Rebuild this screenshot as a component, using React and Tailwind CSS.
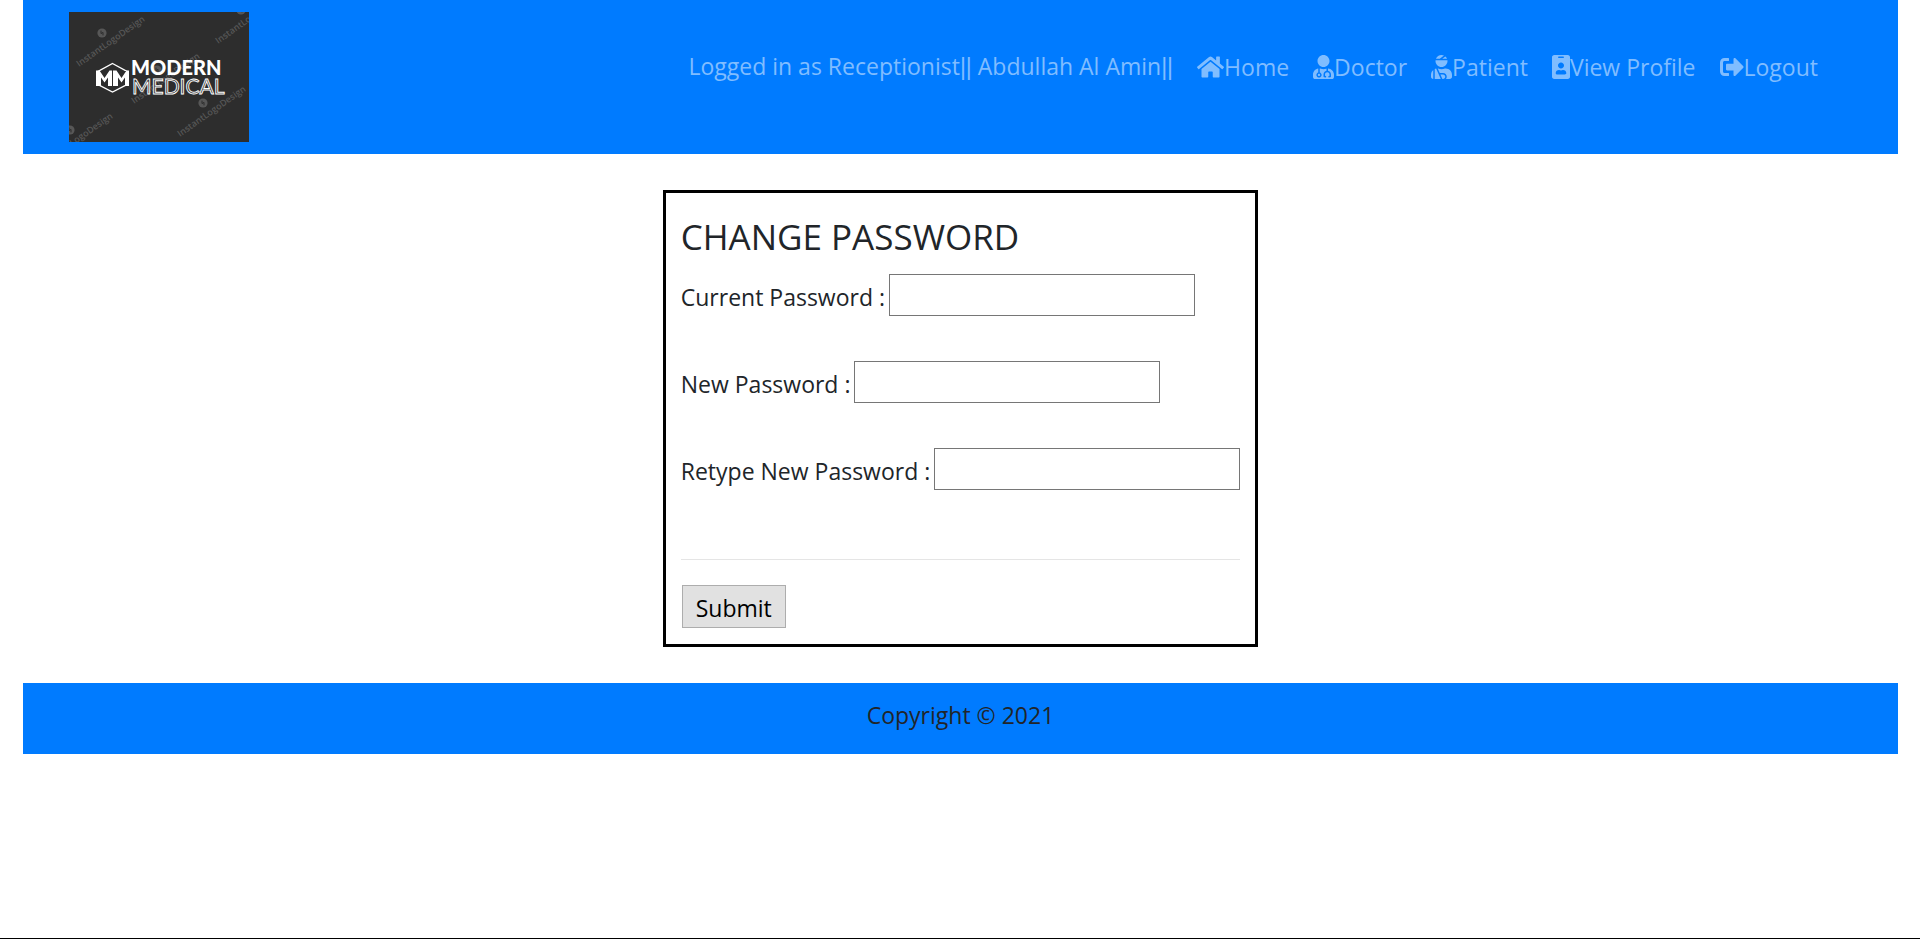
import { FaHome, FaUserMd, FaUserInjured, FaIdBadge, FaSignOutAlt } from "react-icons/fa";

function Watermark({ x, y }) {
  return (
    <g transform={`translate(${x} ${y})`} fill="#575757">
      <circle r="4.6" />
      <path d="M-1 -2.4v3l2 -1.2v3" fill="none" stroke="#2d2d2d" strokeWidth="1" />
      <text
        transform="translate(-23 34) rotate(-35)"
        fontSize="9"
        fontWeight="600"
        fontFamily="'Open Sans', sans-serif"
      >
        InstantLogoDesign
      </text>
    </g>
  );
}

function Logo() {
  return (
    <svg viewBox="0 0 180 130" className="block h-[130px] w-[180px]" role="img" aria-label="Modern Medical">
      <rect width="180" height="130" fill="#2d2d2d" />
      <Watermark x={33} y={21} />
      <Watermark x={172} y={-2} />
      <Watermark x={88} y={58} />
      <Watermark x={134} y={91} />
      <Watermark x={1} y={118} />
      <path d="M43.500 51.500 58 59.500v13L43.500 80 29 72.500v-13z" fill="#2d2d2d" stroke="#fff" strokeWidth="1.400" />
      <rect x="26" y="59" width="35" height="14" fill="#2d2d2d" />
      <path d="M27 74V58.500h3.500l5 7.500 5-7.500H43V74h-4v-8.500l-3.500 5-3.500-5V74zM44 74V58.500h3.500l5 7.500 5-7.500H60V74h-4v-8.500l-3.500 5-3.500-5V74z" fill="#fff" />
      <text x="62" y="63" fontSize="20" fontWeight="900" fontFamily="Lato, sans-serif" fill="#fff">
        MODERN
      </text>
      <text
        x="63"
        y="82"
        fontSize="21"
        fontFamily="Lato, sans-serif"
        fill="#2d2d2d"
        stroke="#fff"
        strokeWidth="0.9"
      >
        MEDICAL
      </text>
    </svg>
  );
}

const links = [
  { label: "Home", icon: <FaHome className="h-6 w-[27px]" /> },
  { label: "Doctor", icon: <FaUserMd className="h-6 w-[21px]" /> },
  { label: "Patient", icon: <FaUserInjured className="h-6 w-[21px]" /> },
  { label: "View Profile", icon: <FaIdBadge className="h-6 w-[18px]" /> },
  { label: "Logout", icon: <FaSignOutAlt className="h-6 w-6" /> },
];

const fields = [
  { id: "current", label: "Current Password :" },
  { id: "new", label: "New Password :" },
  { id: "retype", label: "Retype New Password :" },
];

function Bars() {
  return <span className="font-['Liberation_Sans',sans-serif]">||</span>;
}

export default function App() {
  return (
    <div className="flex min-h-screen flex-col border-b border-black bg-white pr-[22px] pl-[23px] font-['Open_Sans',sans-serif] text-[23px] leading-9 text-[#212529]">
      <header className="flex items-start justify-between bg-[#007bff] py-3 pr-[68px] pl-[46px]">
        <a href="#home">
          <Logo />
        </a>
        <nav className="mt-9 flex text-[#80bdff]">
          <span className="px-3">
            Logged in as Receptionist
            <Bars /> Abdullah Al Amin
            <Bars />
          </span>
          {links.map((l) => (
            <a key={l.label} href="#nav" className="flex items-center px-3">
              {l.icon}
              {l.label}
            </a>
          ))}
        </nav>
      </header>

      <main className="flex justify-center py-9">
        <form className="border-3 border-black px-[15px] pt-[23px] pb-4">
          <h1 className="mb-4 text-[35px] leading-[42px]">CHANGE PASSWORD</h1>
          <div className="flex flex-col gap-[45px]">
            {fields.map((f) => (
              <div key={f.id} className="flex items-center gap-1">
                <label htmlFor={f.id} className="pt-[3px]">
                  {f.label}
                </label>
                <input id={f.id} type="password" className="h-[42px] w-[306px] border border-[#767676] bg-white px-1" />
              </div>
            ))}
          </div>
          <hr className="mt-[69px] mb-[25px] border-[#e5e5e5]" />
          <button type="submit" className="ml-px block h-[43px] border border-[#adadad] bg-[#e1e1e1] px-[13px] pt-[3px] text-black">
            Submit
          </button>
        </form>
      </main>

      <footer className="bg-[#007bff] pt-[14px] pb-[21px] text-center">Copyright © 2021</footer>
    </div>
  );
}
